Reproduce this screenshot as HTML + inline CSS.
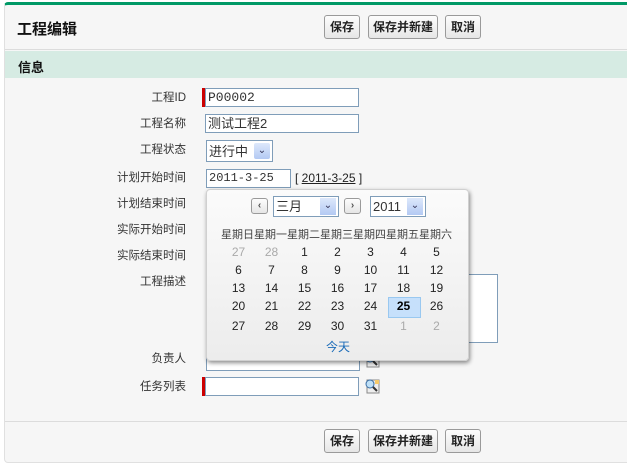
<!DOCTYPE html>
<html><head><meta charset="utf-8"><style>
body{margin:0;width:627px;height:462px;background:#fff;font-family:"Liberation Sans","Noto Sans CJK SC",sans-serif;font-size:12px;color:#333;position:relative;overflow:hidden}
.a{position:absolute}
.panel{left:4px;top:2px;width:640px;height:457px;background:#f6f6f6;border:1px solid #e0e0e0;border-top:3px solid #009966;border-radius:4px 0 0 4px}
.btn{position:absolute;height:22px;border:1px solid #9a9a9a;border-radius:3px;background:linear-gradient(#fdfdfd,#e6e6e6);font-size:12px;font-weight:bold;color:#222;line-height:22px;text-align:center}
.lbl{position:absolute;right:441px;color:#333;font-size:11.5px;text-align:right;white-space:nowrap}
.in{position:absolute;background:#fff;border:1px solid #7f9db9;height:17px;font-size:13px;line-height:17px;padding-left:2px;box-sizing:content-box}
.req{position:absolute;width:3px;background:#c00}
.cal{left:206px;top:189px;width:261px;height:170px;background:linear-gradient(#fbfbfb,#ececec);border:1px solid #d0d0d0;border-radius:4px;box-shadow:1px 2px 4px rgba(0,0,0,.45)}
.d{position:absolute;width:33px;text-align:center;font-size:12px;color:#222}
.g{color:#aaa}
.mag{position:absolute;width:16px;height:16px}
</style></head><body>
<div class="a panel"></div>
<div class="a" style="left:17px;top:18px;font-size:15px;font-weight:bold;color:#111">工程编辑</div>
<div class="btn" style="left:324px;top:15px;width:34px">保存</div>
<div class="btn" style="left:368px;top:15px;width:68px">保存并新建</div>
<div class="btn" style="left:445px;top:15px;width:34px">取消</div>
<div class="a" style="left:5px;top:49px;width:640px;height:1px;background:#dcdcdc"></div>
<div class="a" style="left:5px;top:51px;width:640px;height:27px;background:#d6ebe3"></div>
<div class="a" style="left:18px;top:57px;font-size:13px;font-weight:bold;color:#111">信息</div>

<div class="lbl" style="top:89px">工程ID</div>
<div class="req" style="left:202px;top:88px;height:19px"></div>
<div class="in" style="left:205px;top:88px;width:150px;font-family:'Liberation Mono',monospace">P00002</div>
<div class="lbl" style="top:115px">工程名称</div>
<div class="in" style="left:205px;top:114px;width:150px">测试工程2</div>
<div class="lbl" style="top:141px">工程状态</div>
<div class="in" style="left:206px;top:140px;width:63px;height:20px;line-height:22px;font-size:13px">进行中</div>
<div class="a" style="left:254px;top:143px;width:16px;height:16px;background:linear-gradient(#dde8fb,#b3c9f3);border-radius:2px;color:#335;font-size:10px;text-align:center;line-height:16px">&#8964;</div>
<div class="lbl" style="top:169px">计划开始时间</div>
<div class="in" style="left:206px;top:169px;width:81px;font-family:'Liberation Mono',monospace;font-size:12px">2011-3-25</div>
<div class="a" style="left:295px;top:171px;font-size:12px;color:#222">[ <span style="text-decoration:underline">2011-3-25</span> ]</div>
<div class="lbl" style="top:195px">计划结束时间</div>
<div class="lbl" style="top:221px">实际开始时间</div>
<div class="lbl" style="top:247px">实际结束时间</div>
<div class="lbl" style="top:273px">工程描述</div>
<div class="in" style="left:206px;top:274px;width:288px;height:67px"></div>
<div class="lbl" style="top:350px">负责人</div>
<div class="in" style="left:206px;top:352px;width:150px"></div>
<svg class="mag" style="left:364px;top:352px" viewBox="0 0 16 16"><rect x="3" y="2" width="12" height="13" fill="#eee" stroke="#888"/><circle cx="6" cy="6" r="4" fill="#bfe0f7" stroke="#3a6ea5"/><path d="M9 9l4 4" stroke="#333" stroke-width="2"/></svg>
<div class="lbl" style="top:378px">任务列表</div>
<div class="req" style="left:202px;top:377px;height:19px"></div>
<div class="in" style="left:205px;top:377px;width:150px"></div>
<svg class="mag" style="left:364px;top:378px" viewBox="0 0 16 16"><rect x="3" y="2" width="12" height="13" fill="#eee" stroke="#888"/><rect x="11" y="2" width="4" height="4" fill="#f5c96a"/><circle cx="6" cy="6" r="4" fill="#bfe0f7" stroke="#3a6ea5"/><path d="M9 9l4 4" stroke="#333" stroke-width="2"/></svg>

<div class="a" style="left:5px;top:421px;width:640px;height:1px;background:#dcdcdc"></div>
<div class="btn" style="left:324px;top:429px;width:34px">保存</div>
<div class="btn" style="left:368px;top:429px;width:68px">保存并新建</div>
<div class="btn" style="left:445px;top:429px;width:34px">取消</div>

<div class="a cal"></div>
<div class="btn" style="left:251px;top:198px;width:15px;height:14px;line-height:14px;font-size:10px;color:#555">&#8249;</div>
<div class="in" style="left:273px;top:196px;width:62px;height:19px;line-height:20px">三月</div>
<div class="a" style="left:320px;top:198px;width:16px;height:17px;background:linear-gradient(#dde8fb,#b3c9f3);color:#335;font-size:10px;text-align:center;line-height:16px">&#8964;</div>
<div class="btn" style="left:344px;top:198px;width:15px;height:14px;line-height:14px;font-size:10px;color:#555">&#8250;</div>
<div class="in" style="left:370px;top:196px;width:52px;height:19px;line-height:20px">2011</div>
<div class="a" style="left:407px;top:198px;width:16px;height:17px;background:linear-gradient(#dde8fb,#b3c9f3);color:#335;font-size:10px;text-align:center;line-height:16px">&#8964;</div>
<div class="a" style="left:221px;top:226px;font-size:11px;color:#444;letter-spacing:0px">星期日星期一星期二星期三星期四星期五星期六</div>
<div class="a" style="left:388px;top:297px;width:31px;height:19px;background:#c6e0fb;border:1px solid #99c8f0"></div>
<div id="days"></div>
<div class="a" style="left:326px;top:338px;color:#1a6bb8;font-size:12px">今天</div>
<script>
var rows=[[27,28,1,2,3,4,5],[6,7,8,9,10,11,12],[13,14,15,16,17,18,19],[20,21,22,23,24,25,26],[27,28,29,30,31,1,2]];
var ys=[245,263,281,299,319],h='';
rows.forEach(function(r,i){r.forEach(function(v,j){var g=(i==0&&j<2)||(i==4&&j>4);h+='<div class="d'+(g?' g':'')+'" style="left:'+(222+j*33)+'px;top:'+ys[i]+'px;'+(v==25&&i==3?'font-weight:bold;color:#000':'')+'">'+v+'</div>';});});
document.getElementById('days').innerHTML=h;
</script>
</body></html>
